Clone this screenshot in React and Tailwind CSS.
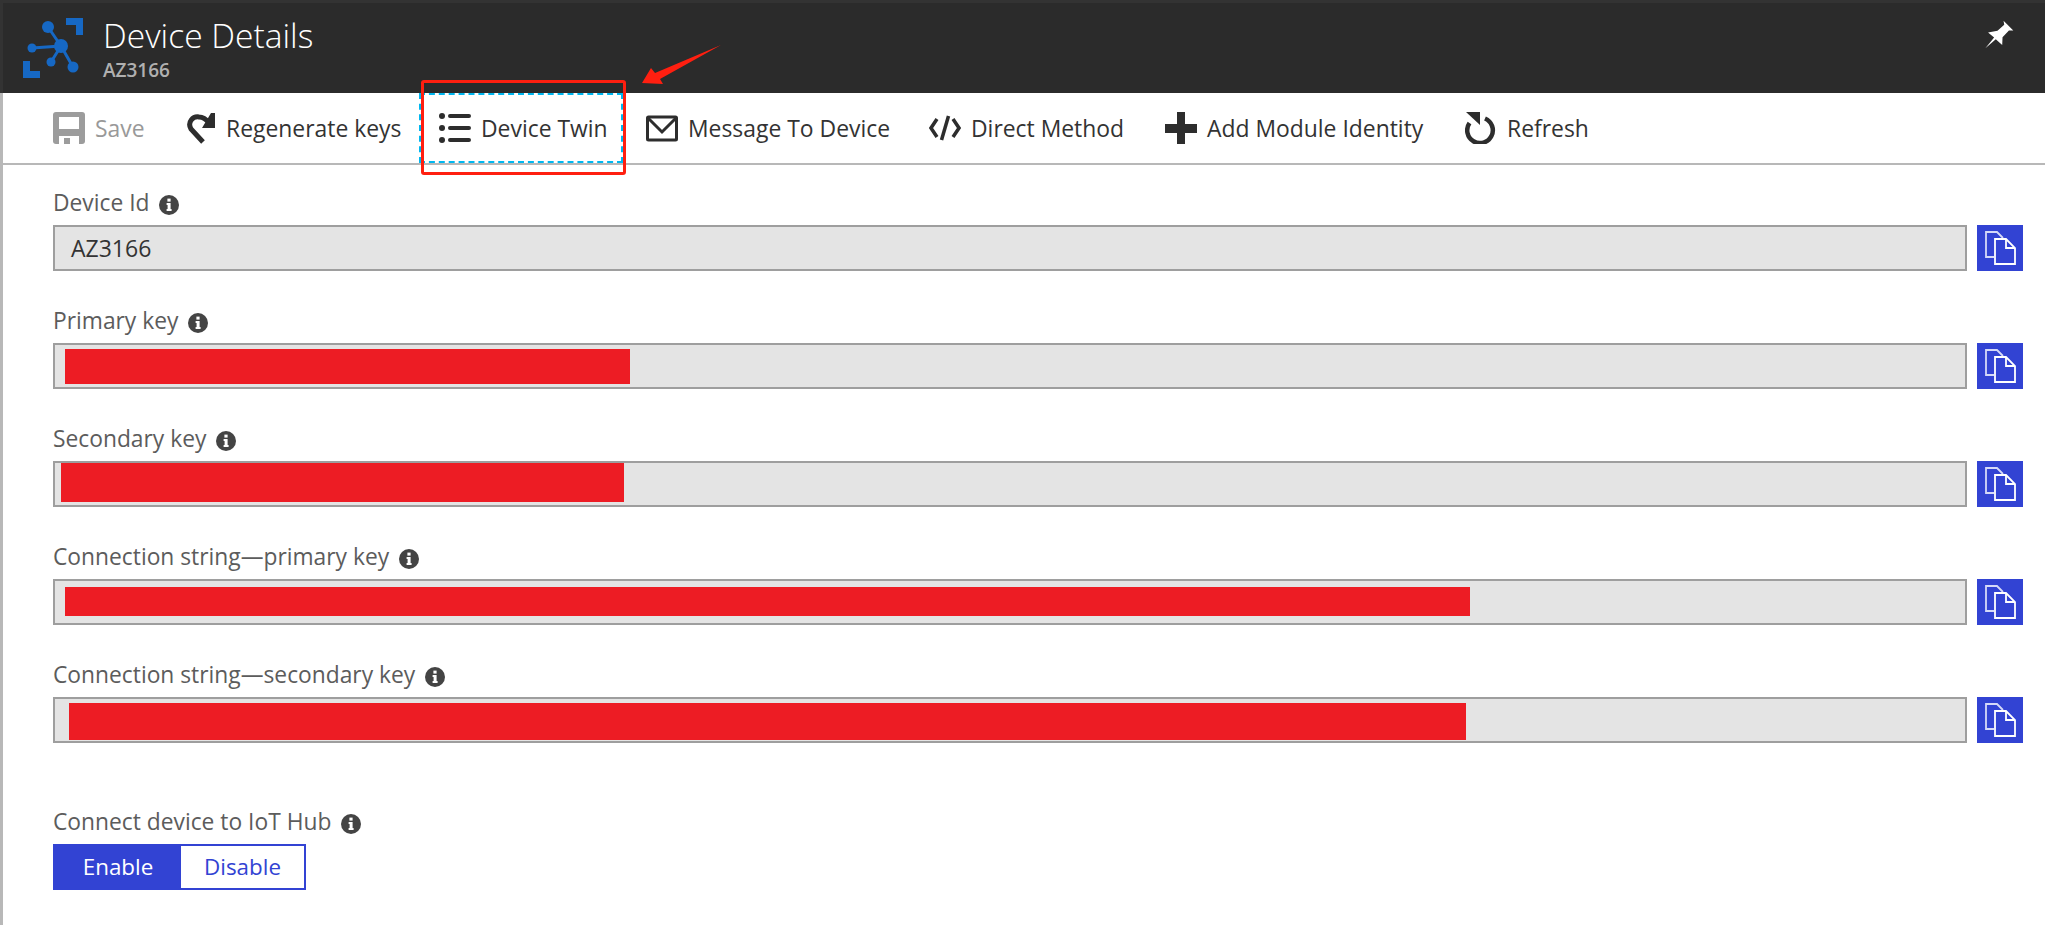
import React from 'react'

const FONT = "font-['Open_Sans',sans-serif]"

function HubLogo() {
  return (
    <svg width="60" height="60" viewBox="0 0 60 60" className="shrink-0">
      <path d="M43 0h17v17h-7V7H43z" fill="#1668c4" />
      <path d="M0 43h7v10h10v7H0z" fill="#1668c4" />
      <g stroke="#1668c4" strokeWidth="3">
        <path d="M38 28L25 9M38 28L9 30M38 28L28 44M38 28L50 49" />
      </g>
      <g fill="#1668c4">
        <circle cx="38" cy="28" r="7" />
        <circle cx="25" cy="9" r="6" />
        <circle cx="9" cy="30" r="4.5" />
        <circle cx="28" cy="44" r="4.5" />
        <circle cx="50" cy="49" r="5.5" />
      </g>
    </svg>
  )
}

function PinIcon() {
  return (
    <svg width="32" height="32" viewBox="255 50 95 95">
      <path d="M262 140L288 108L270 93L298 88L318 70L316 58L345 87L332 87L313 107L312 130L293 113Z" fill="#fff" />
    </svg>
  )
}

function SaveIcon() {
  return (
    <svg width="32" height="32" viewBox="0 0 32 32">
      <rect width="32" height="32" rx="3" fill="#9c9c9c" />
      <rect x="6" y="5" width="20" height="12" fill="#fff" />
      <rect x="6" y="24" width="20" height="8" fill="#fff" />
      <rect x="11" y="26" width="6" height="6" fill="#9c9c9c" />
    </svg>
  )
}

function RegenIcon() {
  return (
    <svg width="30" height="32" viewBox="0 0 30 32">
      <path d="M17 30L5 17C1 10 7 4 13 5C17 5 20 7 23 11" fill="none" stroke="#2d2d2d" strokeWidth="5" />
      <path d="M25 1h4v15H16z" fill="#2d2d2d" />
    </svg>
  )
}

function ListIcon() {
  return (
    <svg width="32" height="32" viewBox="0 0 32 32">
      <g fill="#2d2d2d">
        <circle cx="3" cy="4" r="3" />
        <circle cx="3" cy="16" r="3" />
        <circle cx="3" cy="28" r="3" />
      </g>
      <g stroke="#2d2d2d" strokeWidth="4" strokeLinecap="round">
        <path d="M11 4H30M11 16H30M11 28H30" />
      </g>
    </svg>
  )
}

function MailIcon() {
  return (
    <svg width="32" height="32" viewBox="0 0 32 32">
      <rect x="1.5" y="5" width="29" height="23" rx="1" fill="none" stroke="#2d2d2d" strokeWidth="3" />
      <path d="M2 6L16 20L30 6" fill="none" stroke="#2d2d2d" strokeWidth="3" />
    </svg>
  )
}

function CodeIcon() {
  return (
    <svg width="32" height="32" viewBox="0 0 32 32">
      <g fill="none" stroke="#2d2d2d" strokeWidth="3.5">
        <path d="M8 7L2 16L8 25" />
        <path d="M24 7L30 16L24 25" />
        <path d="M19.5 4L12.5 28" />
      </g>
    </svg>
  )
}

function PlusIcon() {
  return (
    <svg width="32" height="32" viewBox="0 0 32 32">
      <path d="M12 0h8v12h12v9H20v11h-8V21H0v-9h12z" fill="#2d2d2d" />
    </svg>
  )
}

function RefreshIcon() {
  return (
    <svg width="32" height="32" viewBox="0 0 32 32">
      <path d="M20 6.5A12.8 12.8 0 1 1 4.5 11" fill="none" stroke="#2d2d2d" strokeWidth="4.5" />
      <path d="M1 0h14v13z" fill="#2d2d2d" />
    </svg>
  )
}

function InfoIcon() {
  return (
    <svg width="20" height="20" viewBox="0 0 20 20" className="shrink-0">
      <circle cx="10" cy="10" r="10" fill="#444" />
      <rect x="8.4" y="3.6" width="3.2" height="3" fill="#fff" />
      <path d="M7.6 8h4v6h1v2H7.6v-2h1v-4h-1z" fill="#fff" />
    </svg>
  )
}

function CopyIcon() {
  return (
    <svg width="46" height="46" viewBox="0 0 46 46">
      <path d="M17 32H9V7H20L26 13" fill="none" stroke="#d5d9f8" strokeWidth="1.8" />
      <path d="M18 14H29L38 23V39H18Z" fill="none" stroke="#fff" strokeWidth="1.8" />
      <path d="M29 14V23H38" fill="none" stroke="#fff" strokeWidth="1.8" />
    </svg>
  )
}

const actions = [
  { label: 'Save', icon: <SaveIcon />, width: 'w-[133px]', text: 'text-[#999]' },
  { label: 'Regenerate keys', icon: <RegenIcon />, width: 'w-[253px]', text: 'text-[#333]' },
  { label: 'Device Twin', icon: <ListIcon />, width: 'w-[207px]', text: 'text-[#333]' },
  { label: 'Message To Device', icon: <MailIcon />, width: 'w-[283px]', text: 'text-[#333]' },
  { label: 'Direct Method', icon: <CodeIcon />, width: 'w-[236px]', text: 'text-[#333]' },
  { label: 'Add Module Identity', icon: <PlusIcon />, width: 'w-[300px]', text: 'text-[#333]' },
  { label: 'Refresh', icon: <RefreshIcon />, width: 'w-[160px]', text: 'text-[#333]' },
]

const fields = [
  { label: 'Device Id', value: 'AZ3166' },
  { label: 'Primary key', redact: 'left-[10px] top-[4px] w-[565px] h-[35px]' },
  { label: 'Secondary key', redact: 'left-[6px] top-0 w-[563px] h-[39px]' },
  { label: 'Connection string—primary key', redact: 'left-[10px] top-[6px] w-[1405px] h-[29px]' },
  { label: 'Connection string—secondary key', redact: 'left-[14px] top-[4px] w-[1397px] h-[37px]' },
]

function Label({ children }) {
  return (
    <div className="flex items-center gap-[10px] h-[29px] mb-[6px] text-[22.8px] text-[#5c5c5c]">
      <span className="-mt-[3px]">{children}</span>
      <InfoIcon />
    </div>
  )
}

function Field({ label, value, redact }) {
  return (
    <div>
      <Label>{label}</Label>
      <div className="flex gap-[10px]">
        <div className="relative flex-1 h-[46px] flex items-center px-4 border-2 border-[#9e9e9e] bg-[#e4e4e4] text-[23px] text-[#333]">
          {value}
          {redact && <div className={`absolute bg-[#ed1c24] ${redact}`} />}
        </div>
        <button className="w-[46px] h-[46px] bg-[#3243d3]">
          <CopyIcon />
        </button>
      </div>
    </div>
  )
}

export default function App() {
  return (
    <div className={`relative w-[2045px] h-[925px] overflow-hidden bg-white ${FONT}`}>
      {/* Header */}
      <div className="h-[93px] flex items-start bg-[#2b2b2b] border-t-[3px] border-l-[3px] border-[#333] pl-5 pt-[15px] pr-[30px]">
        <HubLogo />
        <div className="ml-5 -mt-[6px] flex-1 text-white">
          <div className="text-[33.6px] leading-[46px] font-light">Device Details</div>
          <div className="text-[19px] leading-[24px] font-semibold text-[#b0b0b0]">AZ3166</div>
        </div>
        <PinIcon />
      </div>

      {/* Body */}
      <div className="h-[832px] border-l-[3px] border-[#b8b8b8]">
        <div className="h-[72px] flex pl-[30px] border-b-2 border-[#b8b8b8]">
          {actions.map((a) => (
            <div key={a.label} className={`h-[70px] ${a.width} pl-5`}>
              <div className={`flex items-center h-full gap-[10px] text-[22.9px] ${a.text}`}>
                {a.icon}
                <span className="pt-[2px]">{a.label}</span>
              </div>
            </div>
          ))}
        </div>

        <div className="pt-[25px] pl-[50px] pr-[22px] flex flex-col gap-[37px]">
          {fields.map((f) => (
            <Field key={f.label} {...f} />
          ))}
        </div>

        <div className="mt-[66px] pl-[50px]">
          <Label>Connect device to IoT Hub</Label>
          <div className="flex w-[253px] h-[46px] text-[22.4px] border-2 border-[#3243d3]">
            <div className="w-[126px] flex items-center justify-center bg-[#3243d3] text-white">Enable</div>
            <div className="flex-1 flex items-center justify-center text-[#3243d3]">Disable</div>
          </div>
        </div>
      </div>

      {/* Annotations drawn on top of the screenshot */}
      <div className="absolute left-[419px] top-[93px] w-[204px] h-[70px] border-2 border-dashed border-[#00b7f0]" />
      <div className="absolute left-[421px] top-[80px] w-[205px] h-[95px] border-[3px] border-[#ff1f10] rounded-[3px]" />
      <svg className="absolute left-[630px] top-[35px]" width="100" height="60" viewBox="630 35 100 60">
        <path d="M642 83L651 68L655 73L721 45L660 79L663 84Z" fill="#ff1f10" />
      </svg>
    </div>
  )
}
